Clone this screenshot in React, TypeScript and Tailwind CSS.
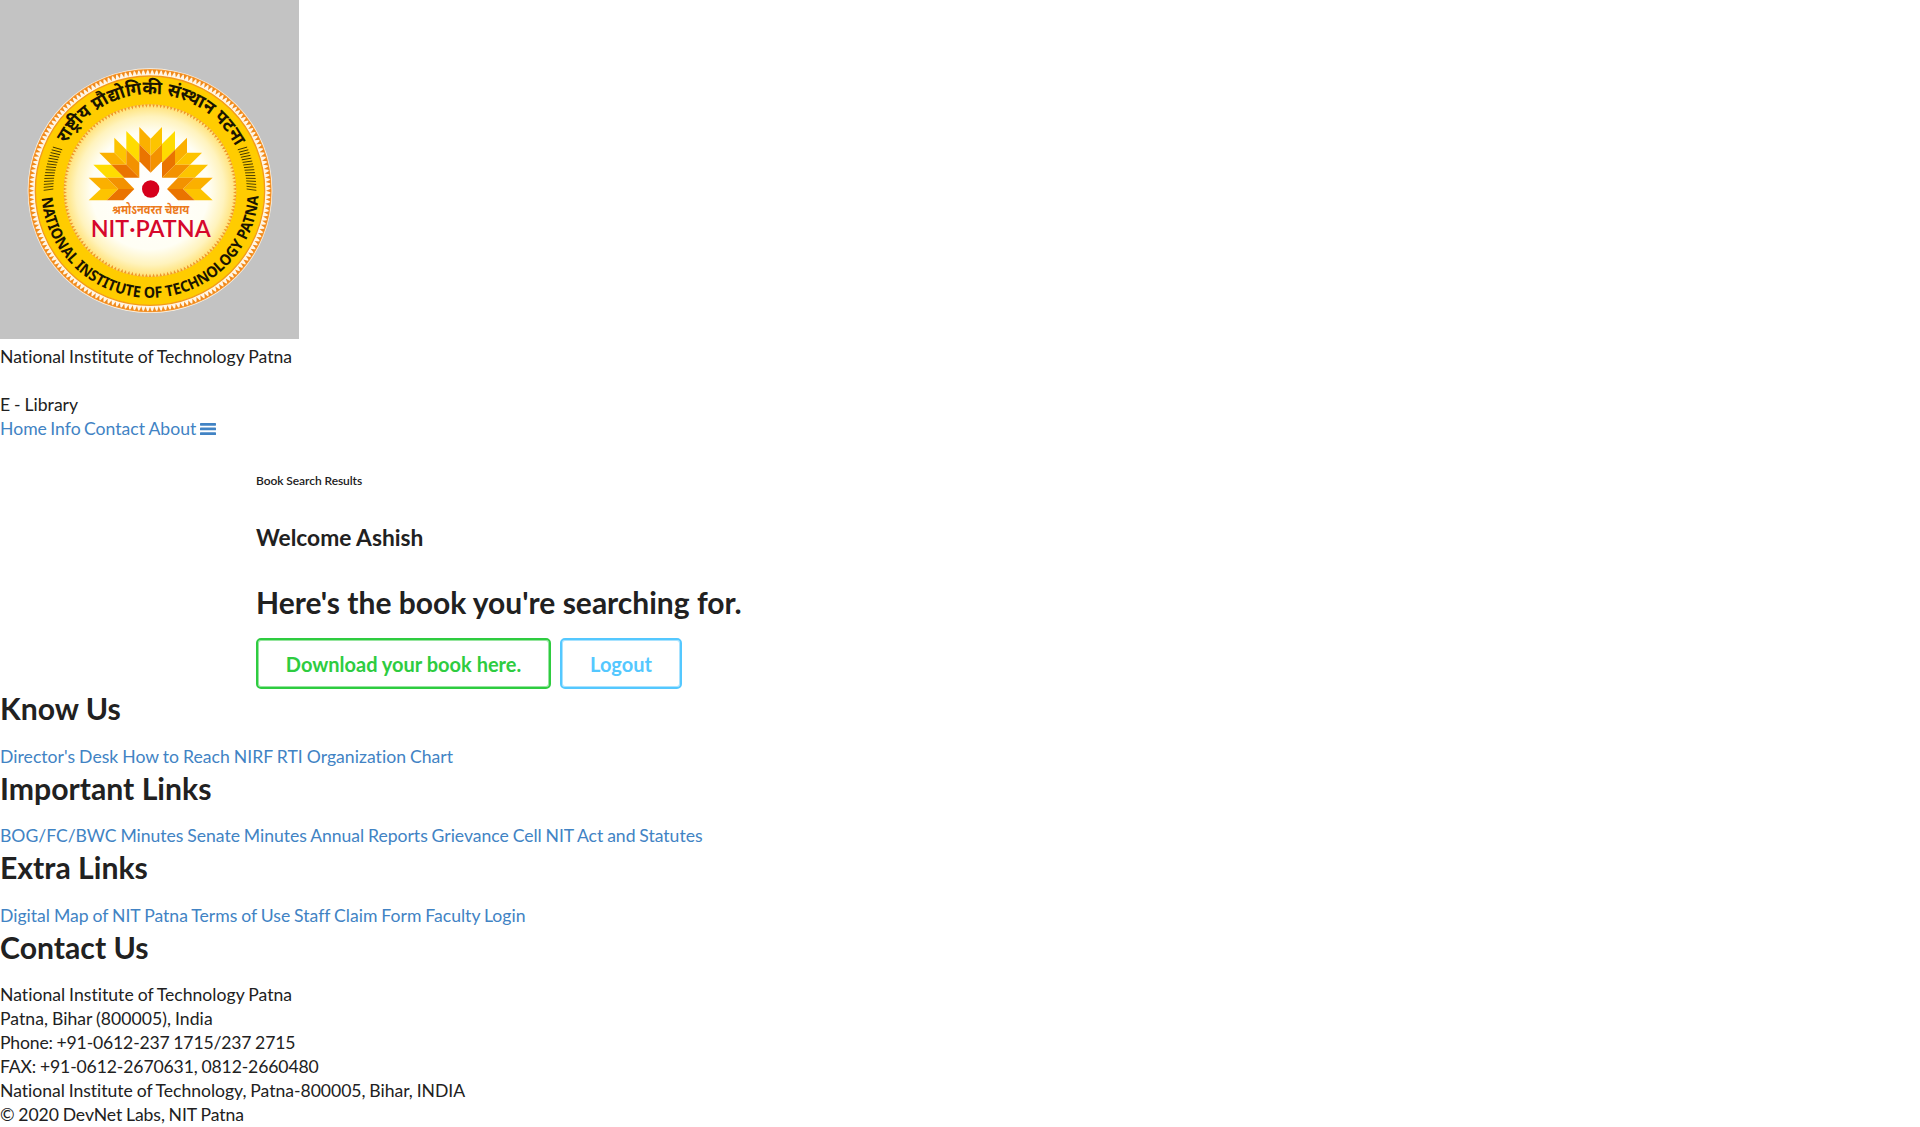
import type { ReactNode } from "react";

const AMBER = "#fbb000";
const GOLD = "#fdc400";
const YELLOW = "#ffdc00";
const ORANGE = "#f39200";
const DEEP = "#ea7400";

const leftPetals: [string, string][] = [
  ["121,27 160,66 160,122 121,83", YELLOW],
  ["22,128 76,128 115,167 62,167", YELLOW],
  ["85,47 121,83 121,128 85,92", GOLD],
  ["40,92 85,92 121,128 76,128", AMBER],
  ["121,83 160,122 160,167 121,128", ORANGE],
  ["76,128 121,128 160,167 115,167", DEEP],
  ["160,15 194,50 194,101 160,67", AMBER],
  ["160,67 194,101 194,152 160,118", DEEP],
  ["8,167 62,167 97,201 44,201", AMBER],
  ["44,201 97,201 62,235 8,235", GOLD],
  ["62,167 112,167 145,201 97,201", ORANGE],
  ["97,201 145,201 112,235 62,235", DEEP],
];
const rightPetals: [string, string][] = [
  ["121,27 160,66 160,122 121,83", YELLOW],
  ["22,128 76,128 115,167 62,167", GOLD],
  ["85,47 121,83 121,128 85,92", AMBER],
  ["40,92 85,92 121,128 76,128", GOLD],
  ["121,83 160,122 160,167 121,128", DEEP],
  ["76,128 121,128 160,167 115,167", ORANGE],
  ["160,15 194,50 194,101 160,67", GOLD],
  ["160,67 194,101 194,152 160,118", ORANGE],
  ["8,167 62,167 97,201 44,201", AMBER],
  ["44,201 97,201 62,235 8,235", GOLD],
  ["62,167 112,167 145,201 97,201", ORANGE],
  ["97,201 145,201 112,235 62,235", DEEP],
];

function Teeth({ n, r, h, w, color }: { n: number; r: number; h: number; w: number; color: string }) {
  return (
    <g fill={color}>
      {Array.from({ length: n }, (_, i) => (
        <polygon
          key={i}
          points={`${450 - w},${452 - r} ${450 + w},${452 - r} 450,${452 - r + h}`}
          transform={`rotate(${(i * 360) / n} 450 452)`}
        />
      ))}
    </g>
  );
}

function Hatch({ side }: { side: 1 | -1 }) {
  return (
    <g stroke="#3a3000" strokeWidth="2.6">
      {Array.from({ length: 16 }, (_, i) => {
        const a = (i * 24) / 15;
        return (
          <line
            key={i}
            x1={450 + side * 290}
            x2={450 + side * 319}
            y1={447}
            y2={451}
            transform={`rotate(${-side * a} 450 451)`}
          />
        );
      })}
    </g>
  );
}

function Seal() {
  return (
    <svg viewBox="0 -120 897 1017" className="block h-[339px] w-[299px] bg-[#c3c3c3]" aria-label="NIT Patna">
      <defs>
        <radialGradient id="glow">
          <stop offset="0" stopColor="#fff" />
          <stop offset="0.68" stopColor="#fffef4" />
          <stop offset="0.86" stopColor="#fff3bd" />
          <stop offset="1" stopColor="#ffe173" />
        </radialGradient>
        <path id="arcTop" d="M 199 311 A 287 287 0 0 1 707 321" />
        <path id="arcBottom" d="M 125 473 A 326 326 0 0 0 775 473" />
      </defs>
      <circle cx="450" cy="452" r="367" fill="#fff6e6" />
      <circle cx="450" cy="452" r="363" fill="none" stroke="#f7a043" strokeWidth="4" />
      <Teeth n={168} r={363} h={15} w={5.6} color="#f08a1c" />
      <circle cx="450" cy="452" r="344" fill="#fc0" stroke="#f39a1c" strokeWidth="4" />
      <circle cx="450" cy="452" r="259" fill="url(#glow)" />
      <Teeth n={150} r={259} h={10} w={4} color="#f0962a" />
      {leftPetals.map(([p, c], i) => (
        <polygon key={i} points={p} fill={c} transform="translate(258 246)" />
      ))}
      {rightPetals.map(([p, c], i) => (
        <polygon key={i} points={p} fill={c} transform="translate(646 246) scale(-1 1)" />
      ))}
      <circle cx="452" cy="447" r="26" fill="#d6001c" />
      <Hatch side={-1} />
      <Hatch side={1} />
      <text className="font-['Noto_Sans_Devanagari','Noto_Sans',sans-serif] font-bold" fontSize="55" fill="#1a1400">
        <textPath href="#arcTop" textLength="622" lengthAdjust="spacingAndGlyphs">
          राष्ट्रीय प्रौद्योगिकी संस्थान पटना
        </textPath>
      </text>
      <text className="font-['Noto_Sans',sans-serif] font-bold" fontSize="46" fill="#1a1400">
        <textPath href="#arcBottom" textLength="978" lengthAdjust="spacingAndGlyphs">
          NATIONAL INSTITUTE OF TECHNOLOGY PATNA
        </textPath>
      </text>
      <text x="337" y="522" fontSize="36" textLength="231" lengthAdjust="spacingAndGlyphs" fill="#ec7a1c" className="font-['Noto_Sans_Devanagari','Noto_Sans',sans-serif] font-bold">
        श्रमोऽनवरत चेष्टाय
      </text>
      <text x="272" y="592" fontSize="70" textLength="360" lengthAdjust="spacingAndGlyphs" fill="#d6082c" className="font-['Lato',sans-serif] font-semibold">
        NIT·PATNA
      </text>
    </svg>
  );
}

function Links({ items, className }: { items: string[]; className?: string }) {
  return (
    <p className={className}>
      {items.map((t) => (
        <span key={t}>
          <a href="#" className="text-[#4183c4]">{t}</a>{" "}
        </span>
      ))}
    </p>
  );
}

function Section({ title, children }: { title: string; children: ReactNode }) {
  return (
    <section>
      <h2 className="mb-[16.6px] text-[30.2px] leading-[39px] font-bold [word-spacing:0px]">{title}</h2>
      {children}
    </section>
  );
}

export default function App() {
  return (
    <div className="min-h-[1127px] bg-white font-['Lato',sans-serif] text-[17.6px] leading-6 text-[#212121] [font-variant-ligatures:none] [word-spacing:-0.6px]">
      <header className="h-[441px]">
        <Seal />
        <div className="mt-[6px] tracking-[0.02px]">National Institute of Technology Patna</div>
        <div className="mt-6">E - Library</div>
        <nav className="flex items-center gap-[3.4px] text-[#4183c4]">
          <a href="#">Home</a>
          <a href="#">Info</a>
          <a href="#">Contact</a>
          <a href="#">About</a>
          <svg viewBox="0 0 16 12" className="h-3 w-4" fill="currentColor">
            <rect width="16" height="2.7" rx="0.6" />
            <rect y="4.6" width="16" height="2.7" rx="0.6" />
            <rect y="9.3" width="16" height="2.7" rx="0.6" />
          </svg>
        </nav>
      </header>
      <main className="ml-64 h-62 pt-8 [word-spacing:0px]">
        <h6 className="text-[12px] leading-4 font-semibold tracking-[-0.07px]">Book Search Results</h6>
        <h3 className="mt-[34px] text-[22.75px] leading-[30px] font-bold">Welcome Ashish</h3>
        <h2 className="mt-[30px] text-[30px] leading-[39px] font-bold">Here's the book you're searching for.</h2>
        <div className="mt-4 flex gap-[9px] text-[20px] font-bold">
          <button className="h-[51px] w-[295px] rounded-[5px] border-2 border-[#2ecc40] text-[#2ecc40] shadow-[inset_0_0_0_1px_#2ecc4080]">Download your book here.</button>
          <button className="h-[51px] w-[122px] rounded-[5px] border-2 border-[#54c8ff] text-[#54c8ff] shadow-[inset_0_0_0_1px_#54c8ff80]">Logout</button>
        </div>
      </main>
      <footer>
        <Section title="Know Us">
          <Links className="tracking-[0.03px]" items={["Director's Desk", "How to Reach", "NIRF", "RTI", "Organization Chart"]} />
        </Section>
        <Section title="Important Links">
          <Links className="tracking-[-0.03px]" items={["BOG/FC/BWC Minutes", "Senate Minutes", "Annual Reports", "Grievance Cell", "NIT Act and Statutes"]} />
        </Section>
        <Section title="Extra Links">
          <Links items={["Digital Map of NIT Patna", "Terms of Use", "Staff Claim Form", "Faculty Login"]} />
        </Section>
        <Section title="Contact Us">
          <p className="tracking-[0.02px]">National Institute of Technology Patna</p>
          <p className="tracking-[0.04px]">Patna, Bihar (800005), India</p>
          <p className="tracking-[-0.17px]">Phone: +91-0612-237 1715/237 2715</p>
          <p className="tracking-[-0.13px]">FAX: +91-0612-2670631, 0812-2660480</p>
          <p className="tracking-[-0.03px]">National Institute of Technology, Patna-800005, Bihar, INDIA</p>
          <p className="tracking-[-0.08px]">© 2020 DevNet Labs, NIT Patna</p>
        </Section>
      </footer>
    </div>
  );
}
